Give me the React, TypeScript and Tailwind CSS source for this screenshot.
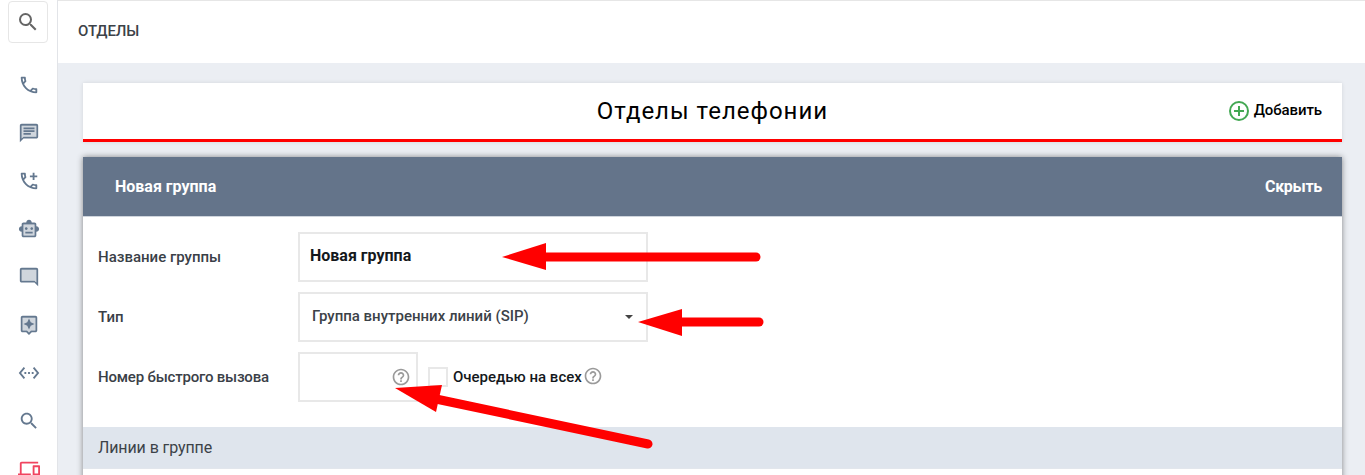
import React from "react";
import { MdSearch } from "react-icons/md";

const Arrows = () => (
  <svg className="absolute left-0 top-0 pointer-events-none" width="1365" height="475" viewBox="0 0 1365 475">
    <g fill="#ff0000" stroke="#ff0000">
      <path d="M540 257H756" strokeWidth="9" strokeLinecap="round" />
      <path d="M502 257L546 243V270Z" strokeWidth="0" />
      <path d="M676 322H759" strokeWidth="9" strokeLinecap="round" />
      <path d="M638 322L682 309V336Z" strokeWidth="0" />
      <path d="M436 399L648 444" strokeWidth="9" strokeLinecap="round" />
      <path d="M395 388L442 385L436 412Z" strokeWidth="0" />
    </g>
  </svg>
);

const NavIcon = ({ children, color = "#64788f" }: { children: React.ReactNode; color?: string }) => (
  <div className="h-[48px] shrink-0 flex items-center justify-center">
    <svg width="22" height="22" viewBox="0 0 24 24" fill={color}>
      {children}
    </svg>
  </div>
);

const Hint = () => (
  <svg width="20" height="20" viewBox="0 0 24 24" fill="#9a9a9a">
    <path d="M11 18h2v-2h-2v2zm1-16C6.48 2 2 6.48 2 12s4.48 10 10 10 10-4.48 10-10S17.52 2 12 2zm0 18c-4.41 0-8-3.59-8-8s3.59-8 8-8 8 3.59 8 8-3.59 8-8 8zm0-14c-2.21 0-4 1.79-4 4h2c0-1.1.9-2 2-2s2 .9 2 2c0 2-3 1.75-3 5h2c0-2.25 3-2.5 3-5 0-2.21-1.79-4-4-4z" />
  </svg>
);

const Sidebar = () => (
  <div className="w-[58px] shrink-0 bg-white border-r border-[#e2e4e8] flex flex-col">
    <div className="mt-px ml-2 w-[40px] h-[42px] shrink-0 border border-[#e6e6e6] rounded-[4px] flex items-center justify-center mb-[18px]">
      <MdSearch size={24} color="#666666" />
    </div>
    <NavIcon>
      <path d="M6.54 5c.06.89.21 1.76.45 2.59l-1.2 1.2c-.41-1.2-.67-2.47-.76-3.79h1.51m9.86 12.02c.85.24 1.72.39 2.6.45v1.49c-1.32-.09-2.59-.35-3.8-.75l1.2-1.19M7.5 3H4c-.55 0-1 .45-1 1 0 9.39 7.61 17 17 17 .55 0 1-.45 1-1v-3.49c0-.55-.45-1-1-1-1.24 0-2.45-.2-3.57-.57-.1-.04-.21-.05-.31-.05-.26 0-.51.1-.71.29l-2.2 2.2c-2.83-1.45-5.15-3.76-6.59-6.59l2.2-2.2c.28-.28.36-.67.25-1.02C8.7 6.45 8.5 5.25 8.5 4c0-.55-.45-1-1-1z" />
    </NavIcon>
    <NavIcon>
      <path opacity=".3" d="M4 18l2-2h14V4H4z" />
      <path d="M20 2H4c-1.1 0-2 .9-2 2v18l4-4h14c1.1 0 2-.9 2-2V4c0-1.1-.9-2-2-2zm0 14H6l-2 2V4h16v12z" />
      <path d="M6 12h8v2H6zm0-3h12v2H6zm0-3h12v2H6z" />
    </NavIcon>
    <NavIcon>
      <path d="M6.54 5c.06.89.21 1.76.45 2.59l-1.2 1.2c-.41-1.2-.67-2.47-.76-3.79h1.51m9.86 12.02c.85.24 1.72.39 2.6.45v1.49c-1.32-.09-2.59-.35-3.8-.75l1.2-1.19M7.5 3H4c-.55 0-1 .45-1 1 0 9.39 7.61 17 17 17 .55 0 1-.45 1-1v-3.49c0-.55-.45-1-1-1-1.24 0-2.45-.2-3.57-.57-.1-.04-.21-.05-.31-.05-.26 0-.51.1-.71.29l-2.2 2.2c-2.83-1.45-5.15-3.76-6.59-6.59l2.2-2.2c.28-.28.36-.67.25-1.02C8.7 6.45 8.5 5.25 8.5 4c0-.55-.45-1-1-1z" />
      <path d="M21 6h-3V3h-2v3h-3v2h3v3h2V8h3z" />
    </NavIcon>
    <NavIcon>
      <path opacity=".3" d="M6 7h12v12H6z" />
      <path d="M20 9V7c0-1.1-.9-2-2-2h-3c0-1.66-1.34-3-3-3S9 3.34 9 5H6c-1.1 0-2 .9-2 2v2c-1.66 0-3 1.34-3 3s1.34 3 3 3v4c0 1.1.9 2 2 2h12c1.1 0 2-.9 2-2v-4c1.66 0 3-1.34 3-3s-1.34-3-3-3zm-2 10H6V7h12v12zm-9-6c-.83 0-1.5-.67-1.5-1.5S8.17 10 9 10s1.5.67 1.5 1.5S9.83 13 9 13zm7.5-1.5c0 .83-.67 1.5-1.5 1.5s-1.5-.67-1.5-1.5.67-1.5 1.5-1.5 1.5.67 1.5 1.5zM8 15h8v2H8v-2z" />
    </NavIcon>
    <NavIcon>
      <path opacity=".3" d="M4 4h16v14l-2-2H4z" />
      <path d="M4 2h16c1.1 0 2 .9 2 2v18l-4-4H4c-1.1 0-2-.9-2-2V4c0-1.1.9-2 2-2zm0 14h14l2 2V4H4v12z" />
    </NavIcon>
    <NavIcon>
      <path opacity=".3" d="M5 18h4.83L12 20.17 14.17 18H19V4H5z" />
      <path d="M19 2H5c-1.1 0-2 .9-2 2v14c0 1.1.9 2 2 2h4l3 3 3-3h4c1.1 0 2-.9 2-2V4c0-1.1-.9-2-2-2zm0 16h-4.83L12 20.17 9.83 18H5V4h14v14zm-7-1l1.88-4.12L18 11l-4.12-1.88L12 5l-1.88 4.12L6 11l4.12 1.88z" />
    </NavIcon>
    <NavIcon>
      <path d="M7.77 6.76L6.23 5.48.82 12l5.41 6.52 1.54-1.28L3.42 12l4.35-5.24zM7 13h2v-2H7v2zm10-2h-2v2h2v-2zm-6 2h2v-2h-2v2zm6.77-7.52l-1.54 1.28L20.58 12l-4.35 5.24 1.54 1.28L23.18 12l-5.41-6.52z" />
    </NavIcon>
    <NavIcon>
      <path d="M15.5 14h-.79l-.28-.27C15.41 12.59 16 11.11 16 9.5 16 5.91 13.09 3 9.5 3S3 5.91 3 9.5 5.91 16 9.5 16c1.61 0 3.09-.59 4.23-1.57l.27.28v.79l5 4.99L20.49 19l-4.99-5zm-6 0C7.01 14 5 11.99 5 9.5S7.01 5 9.5 5 14 7.01 14 9.5 11.99 14 9.5 14z" />
    </NavIcon>
    <NavIcon color="#f0445f">
      <path d="M4 6h18V4H4c-1.1 0-2 .9-2 2v11H0v3h14v-3H4V6zm19 2h-6c-.55 0-1 .45-1 1v10c0 .55.45 1 1 1h6c.55 0 1-.45 1-1V9c0-.55-.45-1-1-1zm-1 9h-4v-7h4v7z" />
    </NavIcon>
  </div>
);

const Row = ({ label, labelClass, children }: { label: string; labelClass?: string; children: React.ReactNode }) => (
  <div className="flex items-center mb-[10px]">
    <div className={`w-[215px] pl-[15px] text-[15px] font-medium text-[#3a4047] ${labelClass ?? ""}`}>{label}</div>
    {children}
  </div>
);

export default function App() {
  return (
    <div className="relative h-[475px] overflow-hidden flex font-['Roboto',sans-serif] bg-[#ebeef3]">
      <Sidebar />
      <div className="flex-1 min-w-0">
        <div className="h-[63px] bg-white flex items-center pl-5 pb-[2px] text-[15px] tracking-[-0.1px] font-medium text-[#3c4248] border-t border-[#e6e6e6]">
          ОТДЕЛЫ
        </div>
        <div className="pt-5 pl-[25px] pr-[23px]">
          <div className="relative h-[59px] bg-white border-b-[3px] border-[#ff0000] shadow-[0_0_4px_rgba(0,0,0,0.1)] flex items-center justify-center">
            <span className="text-[24px] tracking-[1px] text-black">Отделы телефонии</span>
            <div className="absolute right-5 top-[16px] flex items-center gap-[5px] text-[15px] tracking-[-0.1px] font-medium text-black">
              <span className="w-5 h-5 mt-px rounded-full border-2 border-[#43a853] flex items-center justify-center text-[#43a853]">
                <svg width="10" height="10" viewBox="0 0 10 10" fill="#43a853">
                  <path d="M4 0h2v4h4v2H6v4H4V6H0V4h4z" />
                </svg>
              </span>
              Добавить
            </div>
          </div>
          <div className="mt-[15px] bg-white shadow-[0_0_6px_rgba(0,0,0,0.45)]">
            <div className="h-[60px] bg-[#64748a] border-b border-[#cfd5dd] flex items-center justify-between pl-8 pr-5 text-[16px] font-bold text-white">
              <span>Новая группа</span>
              <span className="tracking-[-0.3px]">Скрыть</span>
            </div>
            <div className="pt-[15px] h-[210px]">
              <Row label="Название группы">
                <div className="w-[350px] h-[50px] border-2 border-[#e8e8e8] flex items-center pl-[10px] pb-[2px] text-[16px] font-bold text-[#14181c]">
                  Новая группа
                </div>
              </Row>
              <Row label="Тип">
                <div className="w-[350px] h-[50px] border-2 border-[#e8e8e8] flex items-center justify-between pl-3 pr-[13px] pb-[2px] text-[15px] font-medium text-[#3c4248]">
                  Группа внутренних линий (SIP)
                  <span className="w-0 h-0 mt-[2px] border-x-[4px] border-x-transparent border-t-[4px] border-t-[#444444]" />
                </div>
              </Row>
              <Row label="Номер быстрого вызова" labelClass="tracking-[-0.2px]">
                <div className="w-[120px] h-[50px] border-2 border-[#e8e8e8] flex items-center justify-end pr-[5px]">
                  <Hint />
                </div>
                <div className="ml-[10px] w-5 h-5 border-2 border-[#e8e8e8]" />
                <span className="ml-[5px] text-[15px] font-medium text-[#14181c]">Очередью на всех</span>
                <span className="ml-px flex -mt-[2px]">
                  <Hint />
                </span>
              </Row>
            </div>
            <div className="h-[41px] bg-[#dfe5ed] flex items-center pl-[15px] text-[16px] tracking-[-0.1px] text-[#3c4248]">
              Линии в группе
            </div>
            <div className="h-[20px] border-t border-[#e2e6ec]" />
          </div>
        </div>
      </div>
      <Arrows />
    </div>
  );
}
